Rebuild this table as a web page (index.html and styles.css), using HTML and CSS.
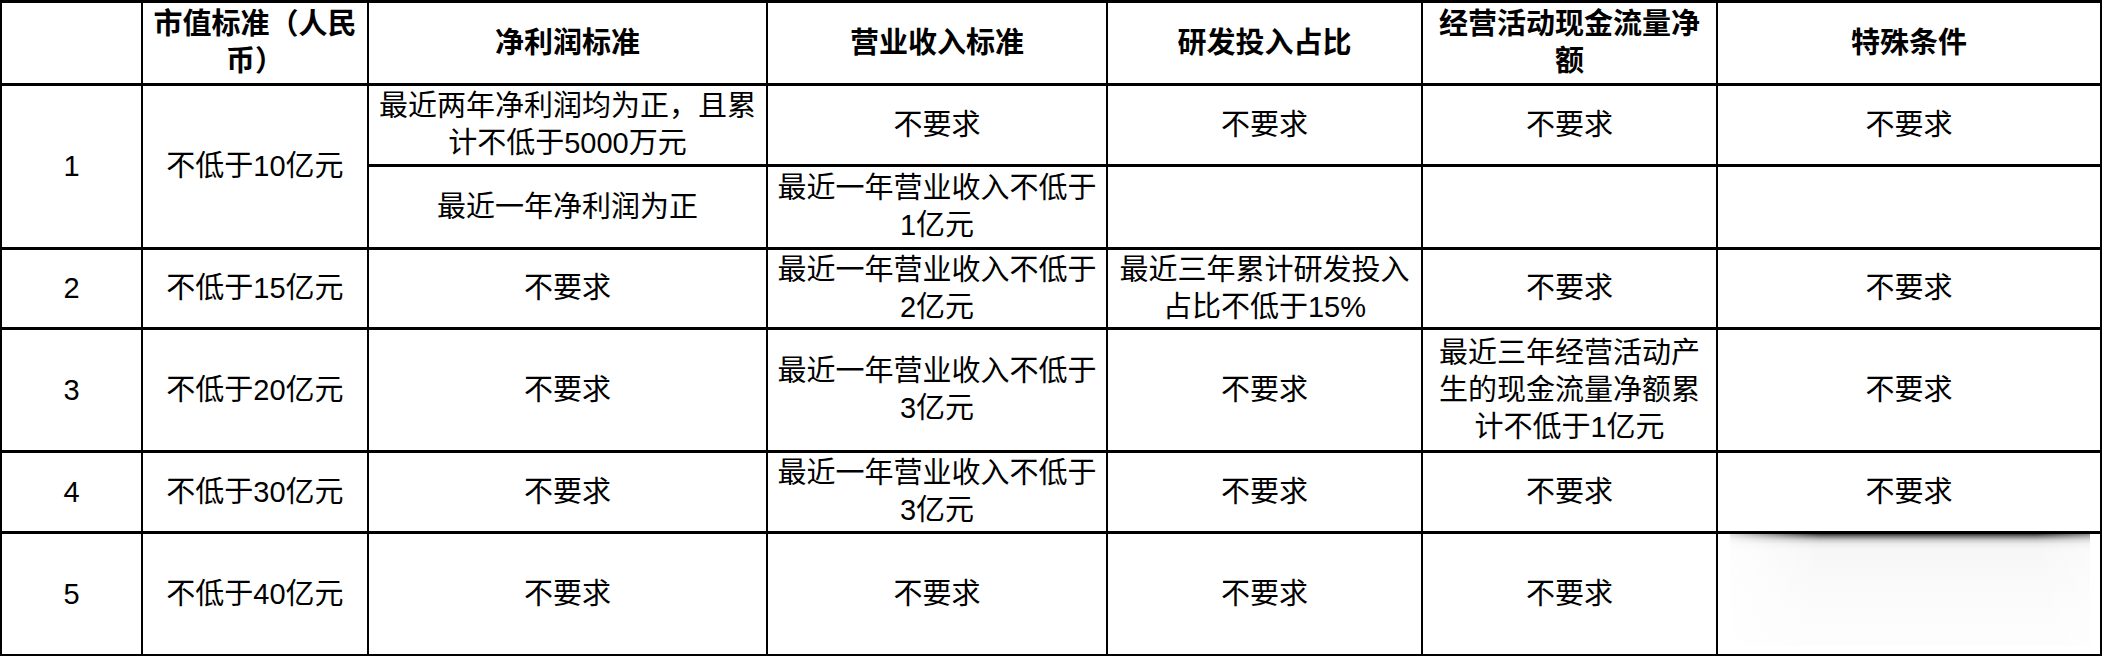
FILE: index.html
```html
<!DOCTYPE html>
<html lang="zh-CN">
<head>
<meta charset="utf-8">
<title>上市标准</title>
<link rel="stylesheet" href="styles.css">
</head>
<body>
<table class="grid">
  <colgroup>
    <col class="c0"><col class="c1"><col class="c2"><col class="c3"><col class="c4"><col class="c5"><col class="c6">
  </colgroup>
  <thead>
    <tr class="r-head">
      <th></th>
      <th>市值标准（人民币）</th>
      <th>净利润标准</th>
      <th>营业收入标准</th>
      <th>研发投入占比</th>
      <th>经营活动现金流量净额</th>
      <th>特殊条件</th>
    </tr>
  </thead>
  <tbody>
    <tr class="r-1a">
      <td rowspan="2">1</td>
      <td rowspan="2">不低于10亿元</td>
      <td>最近两年净利润均为正，且累计不低于5000万元</td>
      <td>不要求</td>
      <td>不要求</td>
      <td>不要求</td>
      <td>不要求</td>
    </tr>
    <tr class="r-1b">
      <td>最近一年净利润为正</td>
      <td>最近一年营业收入不低于1亿元</td>
      <td></td>
      <td></td>
      <td></td>
    </tr>
    <tr class="r-2">
      <td>2</td>
      <td>不低于15亿元</td>
      <td>不要求</td>
      <td>最近一年营业收入不低于2亿元</td>
      <td>最近三年累计研发投入占比不低于15%</td>
      <td>不要求</td>
      <td>不要求</td>
    </tr>
    <tr class="r-3">
      <td>3</td>
      <td>不低于20亿元</td>
      <td>不要求</td>
      <td>最近一年营业收入不低于3亿元</td>
      <td>不要求</td>
      <td>最近三年经营活动产生的现金流量净额累计不低于1亿元</td>
      <td>不要求</td>
    </tr>
    <tr class="r-4">
      <td>4</td>
      <td>不低于30亿元</td>
      <td>不要求</td>
      <td>最近一年营业收入不低于3亿元</td>
      <td>不要求</td>
      <td>不要求</td>
      <td>不要求</td>
    </tr>
    <tr class="r-5">
      <td>5</td>
      <td>不低于40亿元</td>
      <td>不要求</td>
      <td>不要求</td>
      <td>不要求</td>
      <td>不要求</td>
      <td class="smudge-cell"><div class="smudge"></div></td>
    </tr>
  </tbody>
</table>
</body>
</html>
```

FILE: styles.css
```css
html, body {
  margin: 0;
  padding: 0;
  background: #ffffff;
}

.grid {
  border-collapse: collapse;
  table-layout: fixed;
  width: 2100px;
  font-family: "Liberation Sans", "Noto Sans CJK SC", sans-serif;
  font-size: 29px;
  line-height: 37px;
  color: #000;
}

.c0 { width: 141px; }
.c1 { width: 226px; }
.c2 { width: 399px; }
.c3 { width: 340px; }
.c4 { width: 315px; }
.c5 { width: 295px; }
.c6 { width: 384px; }

.grid th,
.grid td {
  border-left: 2px solid #000;
  border-right: 2px solid #000;
  border-top: 3px solid #000;
  border-bottom: 3px solid #000;
  padding: 0 5px;
  text-align: center;
  vertical-align: middle;
  overflow: hidden;
}

.grid th {
  font-weight: 700;
}

.r-head { height: 83px; }
.r-1a { height: 81px; }
.r-1b { height: 83px; }
.r-2 { height: 80px; }
.r-3 { height: 123px; }
.r-4 { height: 81px; }
.r-5 { height: 123px; }

.grid td.smudge-cell {
  padding: 0;
  vertical-align: top;
}

.smudge {
  height: 112px;
  margin: 0 10px 0 12px;
  background:
    linear-gradient(to right, rgba(255,255,255,0.85) 0%, rgba(255,255,255,0) 25%, rgba(255,255,255,0) 85%, rgba(255,255,255,0.4) 100%),
    linear-gradient(to bottom, #3a3a3a 0px, #8a8a8a 3px, #c8c8c8 6px, #ececec 10px, #f7f7f7 16px, #fbfbfb 60%, #fdfdfd 100%);
}
```
